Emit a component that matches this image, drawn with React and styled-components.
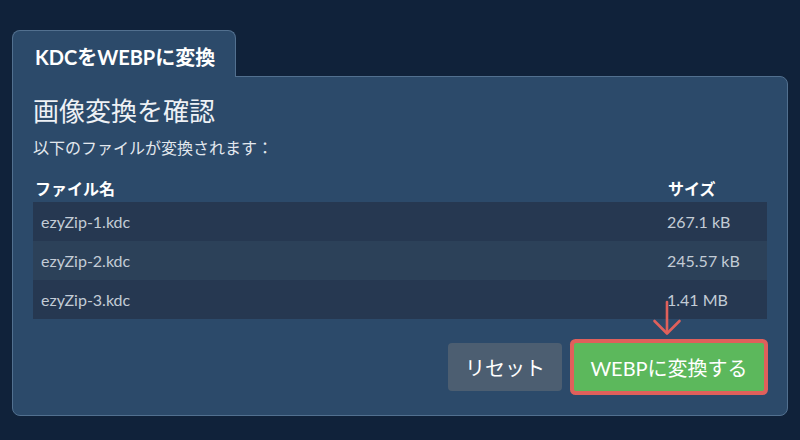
import React from "react";
import styled, { createGlobalStyle } from "styled-components";

const Global = createGlobalStyle`
  html, body { margin: 0; padding: 0; background: #10223a; }
  body { font-family: Lato, "Noto Sans CJK JP", sans-serif; }
`;

const Page = styled.div`
  width: 800px;
  height: 440px;
  box-sizing: border-box;
  padding: 30px 0 0 12px;
  background: #10223a;
`;

const Tab = styled.div`
  position: relative;
  z-index: 1;
  box-sizing: border-box;
  width: 224px;
  height: 47px;
  margin-bottom: -1px;
  padding: 4px 0 0 22px;
  display: flex;
  align-items: center;
  background: #2c4a6a;
  border: 1px solid #52708f;
  border-bottom: none;
  border-radius: 8px 8px 0 0;
  color: #ffffff;
  font-weight: 700;
  font-size: 20px;
`;

const Panel = styled.div`
  position: relative;
  box-sizing: border-box;
  width: 776px;
  height: 340px;
  padding: 18px 19px 0 20px;
  background: #2c4a6a;
  border: 1px solid #52708f;
  border-radius: 0 8px 8px 8px;
  display: flex;
  flex-direction: column;
`;

const Heading = styled.h2`
  margin: 0;
  font-size: 26px;
  line-height: 32px;
  font-weight: 400;
  color: #eef1f5;
`;

const Sub = styled.p`
  margin: 10px 0 0;
  font-size: 16px;
  line-height: 22px;
  color: #e3e8ee;
`;

const Table = styled.div`
  margin-top: 19px;
  display: grid;
  grid-template-columns: 634px 100px;
`;

const HeadCell = styled.div`
  font-size: 16px;
  line-height: 22px;
  font-weight: 700;
  color: #ffffff;
  padding: 0 0 2px ${(p) => (p.$size ? "1px" : "2px")};
`;

const Cell = styled.div`
  height: 39px;
  display: flex;
  align-items: center;
  font-size: 16px;
  color: #c3ccd6;
  background: ${(p) => (p.$odd ? "#263851" : "#2c4159")};
  padding-left: ${(p) => (p.$size ? "0" : "8px")};
`;

const Actions = styled.div`
  margin-top: 24px;
  display: flex;
  justify-content: flex-end;
  gap: 12px;
  padding-right: 4px;
`;

const Button = styled.button`
  height: 48px;
  border: none;
  font-family: Lato, "Noto Sans CJK JP", sans-serif;
  font-size: 20px;
  color: #ffffff;
  cursor: pointer;
  padding: 0;
  width: ${(p) => (p.$primary ? "190px" : "114px")};
  background: ${(p) => (p.$primary ? "#5cb85c" : "#4c5e71")};
  box-shadow: ${(p) => (p.$primary ? "0 0 0 4px #e0605b" : "none")};
  border-radius: ${(p) => (p.$primary ? "2px" : "4px")};
`;

const Arrow = styled.svg`
  position: absolute;
  left: 640px;
  top: 224px;
  overflow: visible;
`;

const files = [
  ["ezyZip-1.kdc", "267.1 kB"],
  ["ezyZip-2.kdc", "245.57 kB"],
  ["ezyZip-3.kdc", "1.41 MB"],
];

export default function App() {
  return (
    <Page>
      <Global />
      <Tab>KDCをWEBPに変換</Tab>
      <Panel>
        <Heading>画像変換を確認</Heading>
        <Sub>以下のファイルが変換されます：</Sub>
        <Table>
          <HeadCell>ファイル名</HeadCell>
          <HeadCell $size>サイズ</HeadCell>
          {files.map(([n, s], i) => (
            <React.Fragment key={n}>
              <Cell $odd={i % 2 === 0}>{n}</Cell>
              <Cell $odd={i % 2 === 0} $size>{s}</Cell>
            </React.Fragment>
          ))}
        </Table>
        <Actions>
          <Button>リセット</Button>
          <Button $primary>WEBPに変換する</Button>
        </Actions>
        <Arrow width="30" height="36" viewBox="0 0 30 36">
          <path d="M14 1 V32" stroke="#e0605b" strokeWidth="2.6" fill="none" strokeLinecap="round" />
          <path d="M1.5 20 L14 32.5 L26.5 20" stroke="#e0605b" strokeWidth="2.6" fill="none" strokeLinecap="round" strokeLinejoin="round" />
        </Arrow>
      </Panel>
    </Page>
  );
}
